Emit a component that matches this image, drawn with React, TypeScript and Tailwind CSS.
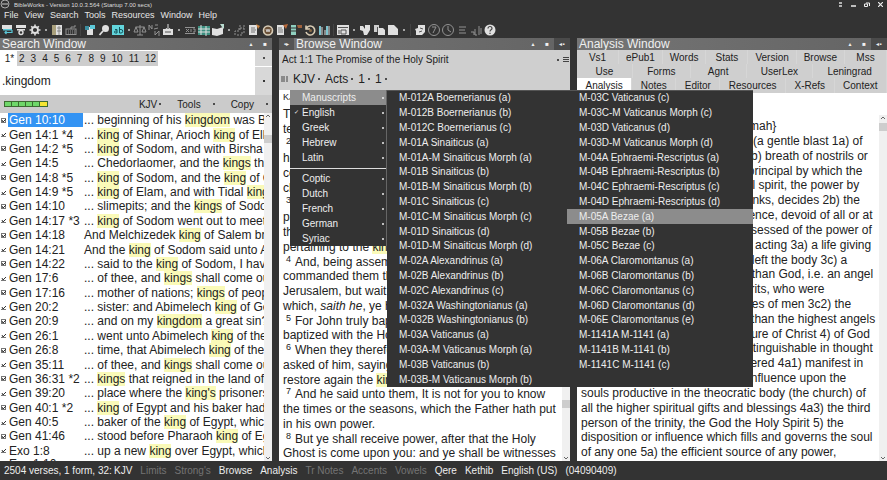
import { Fragment, type ReactNode } from 'react';
import { clsx } from 'clsx';

const menuBar = ['File', 'View', 'Search', 'Tools', 'Resources', 'Window', 'Help'];

const results: [string, string][] = [
  ['Gen 10:10', '... beginning of his kingdom was Babel,'],
  ['Gen 14:1 *4', '... king of Shinar, Arioch king of Ellasar,'],
  ['Gen 14:2 *5', '... king of Sodom, and with Birsha king'],
  ['Gen 14:5', '... Chedorlaomer, and the kings that'],
  ['Gen 14:8 *5', '... king of Sodom, and the king of Gomorrah'],
  ['Gen 14:9 *5', '... king of Elam, and with Tidal king of'],
  ['Gen 14:10', '... slimepits; and the kings of Sodom'],
  ['Gen 14:17 *3', '... king of Sodom went out to meet him'],
  ['Gen 14:18', 'And Melchizedek king of Salem brought'],
  ['Gen 14:21', 'And the king of Sodom said unto Abram,'],
  ['Gen 14:22', '... said to the king of Sodom, I have lift'],
  ['Gen 17:6', '... of thee, and kings shall come out'],
  ['Gen 17:16', '... mother of nations; kings of people'],
  ['Gen 20:2', '... sister: and Abimelech king of Gerar'],
  ['Gen 20:9', '... and on my kingdom a great sin? thou'],
  ['Gen 26:1', '... went unto Abimelech king of the'],
  ['Gen 26:8', '... time, that Abimelech king of the'],
  ['Gen 35:11', '... of thee, and kings shall come out'],
  ['Gen 36:31 *2', '... kings that reigned in the land of Edom,'],
  ['Gen 39:20', "... place where the king's prisoners were"],
  ['Gen 40:1 *2', '... king of Egypt and his baker had'],
  ['Gen 40:5', '... baker of the king of Egypt, which were'],
  ['Gen 41:46', '... stood before Pharaoh king of Egypt.'],
  ['Exo 1:8', '... up a new king over Egypt, which knew'],
];

// [verse number or '', line of text]
const browseLines: [string, string][] = [
  ['', 'The former treatise have I made, of all that'],
  ['', 'teach,'],
  ['2', 'Until the day in which he was taken up, after'],
  ['', 'he through the Holy Ghost had given'],
  ['', 'commandments unto the apostles whom he'],
  ['', 'chosen:'],
  ['3', 'To whom also he shewed himself alive after'],
  ['', 'passion by many infallible proofs, being seen'],
  ['', 'them forty days, and speaking of the things'],
  ['', 'pertaining to the kingdom of God:'],
  ['4', 'And, being assembled together with them,'],
  ['', 'commanded them that they should not depart'],
  ['', 'Jerusalem, but wait for the promise of the'],
  ['', 'which, _saith he_, ye have heard of me.'],
  ['5', 'For John truly baptized with water; but ye'],
  ['', 'baptized with the Holy Ghost not many days'],
  ['6', 'When they therefore were come together,'],
  ['', 'asked of him, saying, Lord, wilt thou at this'],
  ['', 'restore again the kingdom to Israel?'],
  ['7', 'And he said unto them, It is not for you to know'],
  ['', 'the times or the seasons, which the Father hath put'],
  ['', 'in his own power.'],
  ['8', 'But ye shall receive power, after that the Holy'],
  ['', 'Ghost is come upon you: and ye shall be witnesses'],
];

const analysisLines = [
  'Meanings: 1) a movement of air (a gentle blast 1a) of',
  'the wind, hence the wind itself 1b) breath of nostrils or',
  'mouth 2) the spirit, i.e. the vital principal by which the',
  'body is animated 2a) the rational spirit, the power by',
  'which the human being feels, thinks, decides 2b) the',
  'soul 3) a spirit, i.e. a simple essence, devoid of all or at',
  'least all grosser matter, and possessed of the power of',
  'knowing, desiring, deciding, and acting 3a) a life giving',
  'spirit 3b) a human soul that has left the body 3c) a',
  'spirit higher than man but lower than God, i.e. an angel',
  '3c1) used of demons, or evil spirits, who were',
  'conceived as inhabiting the bodies of men 3c2) the',
  'spiritual nature of Christ, higher than the highest angels',
  'and equal to God, the divine nature of Christ 4) of God',
  "4a) God's power and agency distinguishable in thought",
  'from his essence in itself considered 4a1) manifest in',
  'the course of affairs 4a2) by its influence upon the',
  'souls productive in the theocratic body (the church) of',
  'all the higher spiritual gifts and blessings 4a3) the third',
  'person of the trinity, the God the Holy Spirit 5) the',
  'disposition or influence which fills and governs the soul',
  'of any one 5a) the efficient source of any power,',
];

const analysisTabs = [
  { minWidth: 'min-w-[42px]', tabs: ['Vs1', 'ePub1', 'Words', 'Stats', 'Version', 'Browse', 'Mss'] },
  { minWidth: 'min-w-14', tabs: ['Use', 'Forms', 'Agnt', 'UserLex', 'Leningrad'] },
  { minWidth: 'min-w-11', tabs: ['Analysis', 'Notes', 'Editor', 'Resources', 'X-Refs', 'Context'] },
];

const languages = [
  ['Manuscripts', 'English', 'Greek', 'Hebrew', 'Latin'],
  ['Coptic', 'Dutch', 'French', 'German', 'Syriac'],
];

const manuscripts = [
  'M-012A Boernerianus (a)', 'M-012B Boernerianus (b)', 'M-012C Boernerianus (c)',
  'M-01A Sinaiticus (a)', 'M-01A-M Sinaiticus Morph (a)', 'M-01B Sinaiticus (b)',
  'M-01B-M Sinaiticus Morph (b)', 'M-01C Sinaiticus (c)', 'M-01C-M Sinaiticus Morph (c)',
  'M-01D Sinaiticus (d)', 'M-01D-M Sinaiticus Morph (d)', 'M-02A Alexandrinus (a)',
  'M-02B Alexandrinus (b)', 'M-02C Alexandrinus (c)', 'M-032A Washingtonianus (a)',
  'M-032B Washingtonianus (b)', 'M-03A Vaticanus (a)', 'M-03A-M Vaticanus Morph (a)',
  'M-03B Vaticanus (b)', 'M-03B-M Vaticanus Morph (b)',
  'M-03C Vaticanus (c)', 'M-03C-M Vaticanus Morph (c)', 'M-03D Vaticanus (d)',
  'M-03D-M Vaticanus Morph (d)', 'M-04A Ephraemi-Rescriptus (a)', 'M-04B Ephraemi-Rescriptus (b)',
  'M-04C Ephraemi-Rescriptus (c)', 'M-04D Ephraemi-Rescriptus (d)', 'M-05A Bezae (a)',
  'M-05B Bezae (b)', 'M-05C Bezae (c)', 'M-06A Claromontanus (a)', 'M-06B Claromontanus (b)',
  'M-06C Claromontanus (c)', 'M-06D Claromontanus (d)', 'M-06E Claromontanus (e)',
  'M-1141A M-1141 (a)', 'M-1141B M-1141 (b)', 'M-1141C M-1141 (c)',
];

const statusItems = [
  { label: 'KJV', on: true },
  { label: 'Limits', on: false },
  { label: "Strong's", on: false },
  { label: 'Browse', on: true },
  { label: 'Analysis', on: true },
  { label: 'Tr Notes', on: false },
  { label: 'Accents', on: false },
  { label: 'Vowels', on: false },
  { label: 'Qere', on: true },
  { label: 'Kethib', on: true },
  { label: 'English (US)', on: true },
  { label: '(04090409)', on: true },
];

const W = '#e0e0e0';
const D = '#929292';
const T = '#5cc8d8';

// Toolbar glyphs, each drawn in a 14x14 box. 'dot' is a drop-down mark, 'sep' a divider.
const tools: (['dot' | 'sep'] | [string, ReactNode])[] = [
  ['Swap', <><path d="M2 2h10v4H2z" fill={W} /><path d="M3 6h9v1.500H3z" fill={T} /><path d="M5 9.500h7V7M6.500 8L5 9.500 6.500 11" stroke={T} strokeWidth="1.200" fill="none" /></>],
  ['Filter', <><path d="M2 2h10v3H2zM3 6h8v1.500H3z" fill={W} /><circle cx="7" cy="9.500" r="2" stroke={W} strokeWidth="1.400" fill="none" /></>],
  ['Options', <><circle cx="7" cy="7" r="3" stroke={W} strokeWidth="1.800" fill="none" /><path d="M7 1.500v2M7 10.500v2M1.500 7h2M10.500 7h2M3.200 3.200l1.500 1.500M9.300 9.300l1.500 1.500M3.200 10.800l1.500-1.500M9.300 4.700l1.500-1.500" stroke={W} strokeWidth="1.600" /></>],
  ['dot'],
  ['Lexicon', <><path d="M2 2h4v10H2z" fill="#a9a07c" /><path d="M6 2h6v10H6z" fill={W} /><path d="M7 5h4M7 8h4M9 3v9" stroke="#777" strokeWidth=".8" /></>],
  ['Keyboard', <><rect x="2" y="6" width="10" height="5.500" stroke={D} fill="none" /><path d="M4 8h7M4 10h7" stroke={D} strokeDasharray="1 1" /><path d="M7 6V4h4V2" stroke={D} fill="none" /></>],
  ['sep'],
  ['New search', <><path d="M4 4h6v8H4z" fill={W} /><path d="M7 2h5v4H7z" fill={T} /><path d="M2 3h4v4H2z" fill="#3b8ea0" /></>],
  ['Find', <><circle cx="8.500" cy="5.500" r="3.500" fill={W} /><path d="M6 8l-3.500 4" stroke={W} strokeWidth="1.800" /></>],
  ['Word list', <><rect x="1" y="2" width="12" height="10" fill="#62d5dc" /><path d="M4 6.500h2V10H4.500a1 1 0 010-2H6M8.500 4v6H10a1 1 0 000-3.500H8.500" stroke="#15545c" fill="none" /></>],
  ['dot'],
  ['Scales', <path d="M7 2v10M4 12h6M2.500 4h9M3 4L1 9h4zM11 4L9 9h4z" stroke={D} fill="none" />],
  ['Compare', <path d="M2 2v5M2 2l3 4V2M8 2h3M7 6l4-1M8 8v4M8 12l4-4v5" stroke={D} fill="none" />],
  ['Import', <><path d="M2 6h10v6H2z" fill={W} /><path d="M7 1v7M5 5l2 3 2-3" stroke={W} fill="none" /><path d="M4 9h6" stroke="#555" /></>],
  ['dot'],
  ['Parallel', <path d="M2 4.500h10M2 10.500h10M3 6l3 3M6 6L3 9M8 6v3M10 6h2v3h-2" stroke={D} fill="none" />],
  ['Map', <><path d="M1 3h12v9H1z" fill="#3c8f80" /><path d="M1 6h12M1 9h12M4 2v10M9 3v10" stroke={W} /></>],
  ['Maps', <><path d="M1 5l5 1 6-2v7l-6 2-5-1z" fill={W} /><path d="M9 1h4v5l-2-2z" fill="#b9dcd0" /></>],
  ['dot'],
  ['Diagram', <path d="M2 12V8h4V5h5M4 12h5V9M7 2v5M11 2v8" stroke={D} strokeDasharray="2 1" fill="none" />],
  ['Copy notes', <><path d="M2 2h8v10H2z" fill={W} /><path d="M9 1l4 2-2 3" fill="#c98543" /><path d="M4 5h4M4 7h5M4 9h4" stroke="#777" /></>],
  ['Timeline', <><circle cx="7" cy="7.500" r="4.500" stroke="#d8cdb8" strokeWidth="1.600" fill="#6b5138" /><path d="M5 6l1 3 1-3 1 3 1-3" stroke={W} strokeWidth=".8" fill="none" /></>],
  ['Report', <><path d="M2 2h7v10H2z" fill={W} /><path d="M8 2l5-1-2 5" fill="#b86a3b" /><path d="M3 5h4M3 7h5M3 9h5" stroke="#777" /></>],
  ['Vocabulary', <><path d="M2 2h5v10H2z" fill="#8fd0c0" /><path d="M2 5h5M2 8h5" stroke="#333" /><path d="M8 2h5v3H9z" fill="#a0623c" /></>],
  ['Refresh', <><path d="M3.500 5a4.500 4.500 0 11-.5 4M3 2.500V6h4" stroke="#d9ccb4" strokeWidth="1.600" fill="none" /><circle cx="7.500" cy="7.500" r="1.500" fill="#8a6a45" /></>],
  ['Sync', <><path d="M3 3v9M10 3v9" stroke="#7fc4cf" strokeWidth="2" /><path d="M5 4v8M12 3v9M8 7v5" stroke={W} /></>],
  ['sep'],
  ['Layout', <><path d="M1 2h12v10H1z" fill={W} /><path d="M2 4.500h10M3 7v4M5 7h5v4H5z" stroke="#555" fill="none" /></>],
  ['dot'],
  ['Arrange', <path d="M2 3h3l2 3V2h5v5l-3 5H6L5 8 2 7z" fill={W} />],
  ['Duplicate', <><path d="M2 2h5v7H2z" fill="#cfcfcf" /><path d="M6 5h5l2 2v5H6z" fill={W} /><path d="M5.500 4v6" stroke="#333" strokeWidth=".8" /></>],
  ['New page', <path d="M2 2h6l4 4v6H2z" fill={W} />],
  ['dot'],
  ['sep'],
  ['Flashcards', <><path d="M5 2h7v7l-3 3H3V8L2 6l3-1z" fill={W} /><path d="M7 5l3 1M6 9l3-1" stroke="#555" /></>],
  ['Back', <><circle cx="7" cy="7" r="5.500" stroke={D} fill="none" /><path d="M5 4h4L6 10" stroke={D} fill="none" /></>],
  ['History', <><circle cx="7" cy="7" r="5.500" stroke={D} fill="none" /><path d="M7 3v4l3 2" stroke={D} fill="none" /></>],
  ['Outline', <path d="M4 4h7M4 7h6M4 10h7" stroke={D} strokeWidth="1.200" />],
  ['Stats', <path d="M2 9h3v3M6 6v6h2M10 3v9M12 5v6" stroke={D} fill="none" />],
  ['Help', <><circle cx="7" cy="7" r="5.500" fill={W} /><path d="M5 5.500a2 2 0 114 0c0 1.500-2 1-2 3M7 9.800v1.200" stroke="#444" strokeWidth="1.200" fill="none" /></>],
];

function Highlighted({ text }: { text: string }) {
  return (
    <>
      {text.split(/(king(?:dom|'s|s)?|_[^_]+_)/).map((part, i) => {
        if (part.startsWith('king')) return <mark key={i} className="bg-[#fafab8] text-inherit">{part}</mark>;
        if (part.startsWith('_')) return <em key={i}>{part.slice(1, -1)}</em>;
        return <Fragment key={i}>{part}</Fragment>;
      })}
    </>
  );
}

function PanelTitle({ title, left, pinned }: { title: string; left?: boolean; pinned?: boolean }) {
  return (
    <header className="flex h-3 shrink-0 items-center bg-linear-to-r from-[#757575] to-[#646464] text-xs leading-3 text-[#f0f0f0]">
      {left && <span className="flex h-3 w-[15px] items-center justify-center bg-[#555] text-[6px]">▪▸</span>}
      <h2 className="px-0.5">{title}</h2>
      <button className="ml-auto w-3.5 text-[5px]" aria-label="Collapse">▲</button>
      <button className="w-3.5 text-[6px]" aria-label="Maximize">■</button>
      {pinned && <button className="h-3 w-4 bg-[#4a4a4a] text-[6px]" aria-label="Pin">◂▪</button>}
    </header>
  );
}

function Dot() {
  return <span className="inline-block size-0.5 shrink-0 rounded-full bg-current" />;
}

function Scrollbar({ thumb }: { thumb: string }) {
  return (
    <div className="flex w-2 shrink-0 flex-col items-center bg-[#f0f0f0] text-[#666]">
      <svg viewBox="0 0 6 6" className="size-1.5 shrink-0"><path d="M1 4l2-2 2 2" stroke="currentColor" fill="none" /></svg>
      <div className="relative w-full flex-1">
        <div className={clsx('absolute inset-x-0 h-2 bg-[#cdcdcd]', thumb)} />
      </div>
      <svg viewBox="0 0 6 6" className="size-1.5 shrink-0"><path d="M1 2l2 2 2-2" stroke="currentColor" fill="none" /></svg>
    </div>
  );
}

function Toolbar() {
  return (
    <div className="flex h-[17px] shrink-0 items-center text-[#ccc]">
      {tools.map(([name, art], i) => {
        if (name === 'dot') return <span key={i} className="flex w-2 shrink-0 justify-center"><Dot /></span>;
        if (name === 'sep') return <span key={i} className="flex w-[5px] shrink-0 justify-center"><span className="h-3 w-px bg-[#444]" /></span>;
        return (
          <button key={i} aria-label={name} className="size-3.5 shrink-0">
            <svg viewBox="0 0 14 14" className="size-3.5">{art}</svg>
          </button>
        );
      })}
    </div>
  );
}

function SearchPanel() {
  return (
    <section className="flex min-w-0 flex-col overflow-hidden bg-white">
      <PanelTitle title="Search Window" />
      <div className="flex h-[17px] shrink-0 items-center text-[10px] text-[#222]">
        <button className="w-[17px] pl-0.5">1*</button>
        <div className="flex h-[15px] items-center gap-1.5 bg-[#cdcdcd] px-0.5">
          {Array.from({ length: 11 }, (_, i) => <button key={i}>{i + 2}</button>)}
        </div>
        <button className="ml-auto flex h-full w-[17px] items-center justify-center border-b border-white bg-[#d8d8d8]" aria-label="Tab list"><Dot /></button>
      </div>
      <div className="flex h-7 shrink-0">
        <input aria-label="Command line" defaultValue=".kingdom" className="min-w-0 flex-1 px-0.5 text-xs text-[#222] outline-none" />
        <button className="flex w-[17px] items-center justify-center bg-[#d8d8d8]" aria-label="Command history"><Dot /></button>
      </div>
      <div className="flex h-[18px] shrink-0 items-center bg-[#cbcbcb] px-1 text-[10px] text-[#222]">
        <div className="flex border border-[#3c6b32]">
          {[0, 1, 2, 3, 4, 5].map((n) => (
            <span key={n} className={clsx('h-1 w-[7px] border-[#3c6b32]', n === 5 ? 'bg-[#f5e532]' : 'border-r bg-[#6fd86a]')} />
          ))}
        </div>
        <button className="ml-auto flex items-center gap-0.5">KJV <Dot /></button>
        <button className="ml-4 flex items-center gap-3">Tools <Dot /></button>
        <button className="ml-4 flex items-center gap-3">Copy <Dot /></button>
      </div>
      <div className="flex min-h-0 flex-1">
        <div className="flex min-w-0 flex-1 flex-col overflow-hidden">
          <ul className="grid min-h-0 flex-1 auto-rows-fr text-xs leading-[14px] text-[#222]">
            {results.map(([ref, text], i) => (
              <li key={ref} className="flex min-h-0 items-center whitespace-nowrap">
                <label className="flex w-[83px] shrink-0 items-center gap-0.5 pl-px">
                  <span className="relative size-[5px] shrink-0">
                    <input type="checkbox" defaultChecked className={clsx('absolute inset-0 appearance-none border-[#777]', i % 2 ? 'border-b' : 'border')} />
                    <svg viewBox="0 0 5 5" className="pointer-events-none absolute inset-0"><path d="M1 2l1 2 3-3" stroke="#333" fill="none" /></svg>
                  </span>
                  <span className={clsx('flex-1 pl-px', i === 0 && 'bg-[#3393f3] text-white')}>{ref}</span>
                </label>
                <span className="pl-px"><Highlighted text={text} /></span>
              </li>
            ))}
          </ul>
          <div className="h-[3px] shrink-0 overflow-hidden pl-[9px] text-xs leading-3 whitespace-nowrap text-[#222]">
            Exo 1:10
          </div>
        </div>
        <Scrollbar thumb="top-4" />
      </div>
    </section>
  );
}

function LanguageMenu() {
  return (
    <div role="menu" className="absolute top-0 left-[11px] z-10 flex w-[97px] flex-col border-r border-[#666] bg-[#333] text-[10px] text-[#eee]">
      {languages.map((group, g) => (
        <div key={g} className={clsx(g > 0 && 'mt-[3px] border-t border-[#ddd] pt-0.5')}>
          {group.map((name) => (
            <button
              key={name}
              role="menuitem"
              className={clsx('flex h-[15px] w-full items-center pr-0.5 text-left', name === 'Manuscripts' && 'bg-[#8c8c8c]')}
            >
              <span className="w-3 pl-1 text-[6px]">{name === 'English' && '✓'}</span>
              <span className="flex-1">{name}</span>
              <Dot />
            </button>
          ))}
        </div>
      ))}
    </div>
  );
}

function ManuscriptMenu() {
  return (
    <div
      role="menu"
      className="absolute top-0 left-[108px] z-20 grid h-[297px] w-[366px] grid-flow-col grid-cols-[180px_186px] grid-rows-[repeat(20,minmax(0,1fr))] border-t border-[#555] bg-[#333] text-[10px] leading-[14px] text-[#eee]"
    >
      {manuscripts.map((name) => (
        <button
          key={name}
          role="menuitem"
          className={clsx('min-h-0 pl-3 text-left whitespace-nowrap', name === 'M-05A Bezae (a)' && 'bg-[#8c8c8c]')}
        >
          {name}
        </button>
      ))}
    </div>
  );
}

function BrowsePanel() {
  return (
    <section className="flex min-w-0 flex-col bg-white">
      <PanelTitle title="Browse Window" left pinned />
      <div className="flex h-[19px] shrink-0 items-center bg-[#cfcfcf] pr-px pl-[3px] text-[10px] text-[#222]">
        <h3 className="flex-1">Act 1:1 The Promise of the Holy Spirit</h3>
        <Dot />
        <button className="ml-1 flex w-1.5 flex-col gap-px" aria-label="Outline">
          <span className="h-px w-full bg-[#444]" />
          <span className="h-px w-full bg-[#444]" />
          <span className="h-px w-full bg-[#444]" />
        </button>
      </div>
      <div className="flex h-[21px] shrink-0 items-center gap-[5px] bg-[#cfcfcf] px-0.5 pb-0.5 text-xs text-[#222]">
        <svg viewBox="0 0 7 6" className="h-1.5 w-[7px]"><path d="M1 0v6M3 0v6M5 1h2M5 3h2M5 5h2" stroke="#444" /></svg>
        {['KJV', 'Acts', '1', '1'].map((name, i) => (
          <button key={i} className="flex items-center gap-[3px]">{name} <Dot /></button>
        ))}
      </div>
      <div className="relative flex min-h-0 flex-1">
        <div className="flex min-w-0 flex-1 flex-col text-xs leading-[14px] text-[#222]">
          <div className="h-[17px] shrink-0 pl-1 text-[9px]">KJV</div>
          <div className="grid min-h-0 flex-1 auto-rows-fr overflow-hidden pl-1 whitespace-nowrap">
            {browseLines.map(([verse, text]) => (
              <p key={text} className="min-h-0">
                {verse && <sup className="-top-1 pr-1 pl-[3px] text-[9px] leading-none">{verse}</sup>}
                <Highlighted text={text} />
              </p>
            ))}
          </div>
        </div>
        <Scrollbar thumb="bottom-[47px]" />
        <LanguageMenu />
        <ManuscriptMenu />
      </div>
    </section>
  );
}

function AnalysisPanel() {
  return (
    <section className="flex min-w-0 flex-col bg-white">
      <PanelTitle title="Analysis Window" pinned />
      <nav className="shrink-0 bg-[#cfcfcf] text-[10px] text-[#222]">
        {analysisTabs.map(({ minWidth, tabs }) => (
          <div key={minWidth} className="flex h-3.5 last:h-[15px]">
            {tabs.map((tab) => (
              <button key={tab} className={clsx('flex-auto border-r border-[#d6d6d6]', minWidth, tab === 'Analysis' && 'bg-white')}>{tab}</button>
            ))}
          </div>
        ))}
      </nav>
      <div className="mt-[22px] flex min-h-0 flex-1">
        <div className="flex min-w-0 flex-1 flex-col pt-1 pb-px pl-1 text-xs leading-[14px] text-[#222]">
          <p className="h-[15px] shrink-0 pl-[125px] whitespace-nowrap">{"{pnyoo'-mah}"}</p>
          <div className="grid min-h-0 flex-1 auto-rows-fr whitespace-nowrap">
            {analysisLines.map((line) => <p key={line} className="min-h-0">{line}</p>)}
          </div>
        </div>
        <Scrollbar thumb="top-0.5" />
      </div>
    </section>
  );
}

export default function App() {
  return (
    <div className="flex h-screen flex-col overflow-hidden bg-[#333] font-['Liberation_Sans',Arial,sans-serif]">
      <div className="flex h-[9px] shrink-0 items-center text-[6px] leading-none text-[#ddd]">
        <svg viewBox="0 0 10 9" className="h-[9px] w-2.5"><circle cx="5" cy="4" r="4" stroke="#aaa" fill="none" /><path d="M3 3v2M5 3v2M7 3v2" stroke="#ccc" /></svg>
        <span className="flex-1 pl-1">BibleWorks - Version 10.0.3.564 (Startup 7.00 secs)</span>
        <div className="flex items-center gap-2 pr-1">
          <button aria-label="Ribbon"><svg viewBox="0 0 5 5" className="size-[5px]"><path d="M1 1h3M1 4h3" stroke="#ddd" strokeWidth="1.500" /></svg></button>
          <button aria-label="Minimize"><svg viewBox="0 0 5 5" className="size-[5px]"><path d="M0 4h5" stroke="#eee" strokeWidth="1.500" /></svg></button>
          <button aria-label="Restore"><svg viewBox="0 0 6 5" className="h-[5px] w-1.5"><path d="M2 1h3.500v3M.5 2h3v2.500h-3z" stroke="#eee" fill="none" /></svg></button>
          <button aria-label="Close"><svg viewBox="0 0 5 5" className="size-[5px]"><path d="M0 0l5 5M5 0L0 5" stroke="#eee" strokeWidth="1.200" /></svg></button>
        </div>
      </div>
      <nav className="flex h-3.5 shrink-0 items-center gap-1.5 pl-1 text-[9px] text-[#e6e6e6]">
        {menuBar.map((name) => <button key={name}>{name}</button>)}
      </nav>
      <div className="-mt-0.5">
        <Toolbar />
      </div>
      <main className="grid min-h-0 flex-1 grid-cols-[minmax(0,272fr)_minmax(0,291fr)_minmax(0,310fr)] grid-rows-[minmax(0,1fr)] gap-x-[7px]">
        <SearchPanel />
        <BrowsePanel />
        <AnalysisPanel />
      </main>
      <footer className="z-30 flex h-[19px] shrink-0 items-center bg-[#333] pb-px pl-1 text-[10px] whitespace-nowrap text-[#eee]">
        <span className="w-[110px] shrink-0">2504 verses, 1 form, 32:</span>
        <div className="flex gap-2">
          {statusItems.map(({ label, on }) => (
            <button key={label} className={on ? 'text-[#eee]' : 'text-[#747474]'}>{label}</button>
          ))}
        </div>
      </footer>
    </div>
  );
}
